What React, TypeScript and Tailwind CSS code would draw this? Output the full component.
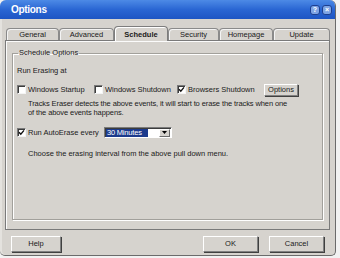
const tabs = [
  { label: "General", w: "w-[53px]" },
  { label: "Advanced", w: "w-[55px]" },
  { label: "Schedule", w: "w-[54px]", active: true },
  { label: "Security", w: "w-[51px]" },
  { label: "Homepage", w: "w-[54px]" },
  { label: "Update", w: "w-[57px]" },
];

const CheckBox = ({ checked }: { checked?: boolean }) => (
  <span className="flex h-[9px] w-[9px] shrink-0 items-center justify-center border border-t-[#7a7a7a] border-l-[#7a7a7a] border-r-[#f4f4f4] border-b-[#f4f4f4] bg-white shadow-[inset_1px_1px_0_#3c3c3c]">
    {checked && (
      <svg width="7" height="7" viewBox="0 0 7 7">
        <polyline points="1,3.2 2.8,5.2 6,1.4" fill="none" stroke="#111" strokeWidth="1.4" />
      </svg>
    )}
  </span>
);

const Button = ({ children, w }: { children: string; w: string }) => (
  <button
    className={`${w} flex h-[16px] items-center justify-center border border-t-white border-l-white border-r-[#808080] border-b-[#808080] bg-[#d6d3ce] text-[7.5px] text-[#1a1a1a] shadow-[1px_1px_0_#404040]`}>
    {children}
  </button>
);

export default function App() {
  return (
    <div className="h-[258px] w-[340px] overflow-hidden bg-[#f2f2f2] font-['Liberation_Sans',Arial,sans-serif] text-[7.5px] leading-[10px] text-[#1a1a1a]">
      <div className="flex h-[256px] w-[336px] flex-col overflow-hidden rounded-t-[6px] rounded-b-[5px] border-r border-b border-[#6b6b6b] bg-[#d6d3ce] shadow-[inset_2px_0_0_#e4e2de]">
        {/* Title bar */}
        <div className="flex h-[19px] shrink-0 items-center justify-between bg-gradient-to-b from-[#4d8ae6] via-[#2a66d3] to-[#1d55c4] pl-[11px] pr-[3px]">
          <span className="text-[10px] font-bold tracking-[-0.3px] text-white">Options</span>
          <div className="flex gap-[2px]">
            <span className="flex h-[10px] w-[10px] items-center justify-center rounded-[3px] border border-[#1d3f8f] bg-[#7ea4e4] text-[7px] font-bold leading-none text-white">?</span>
            <span className="flex h-[10px] w-[10px] items-center justify-center rounded-[3px] border border-[#1d3f8f] bg-[#7ea4e4] text-[7px] font-bold leading-none text-white">×</span>
          </div>
        </div>

        <div className="flex flex-col px-[5px] pt-[7px]">
          {/* Tabs */}
          <div className="ml-[1px] flex h-[14px] items-end">
            {tabs.map((t) =>
              t.active ? (
                <div
                  key={t.label}
                  className={`${t.w} relative z-10 mb-[-1px] flex h-[15px] items-center justify-center rounded-t-[4px] border border-b-0 border-[#7d7d7d] bg-[#d6d3ce] pt-[2px] font-bold shadow-[inset_1px_1px_0_#fff]`}>
                  {t.label}
                </div>
              ) : (
                <div
                  key={t.label}
                  className={`${t.w} flex h-[12px] items-center justify-center rounded-t-[4px] border border-b-0 border-[#8a8a8a] bg-[#d6d3ce] pt-[1px] shadow-[inset_1px_1px_0_#f4f4f4]`}>
                  {t.label}
                </div>
              ),
            )}
          </div>

          {/* Tab panel */}
          <div className="flex h-[190px] flex-col border border-[#7a7a7a] px-[6px] pt-[7px] shadow-[inset_1px_1px_0_#fbfbfb]">
            <fieldset className="h-[172px] border border-[#a2a09b] px-[4px] pt-[8px] shadow-[inset_1px_1px_0_#fff,1px_1px_0_#fff]">
              <legend className="ml-[1px] px-[1px] text-[7.5px] leading-[10px]">Schedule Options</legend>

              <div className="leading-[10px]">Run Erasing at</div>

              {/* Events row */}
              <div className="mt-[8px] flex h-[11px] items-center">
                <label className="flex w-[77px] items-center gap-[2px]">
                  <CheckBox />
                  <span>Windows Startup</span>
                </label>
                <label className="flex w-[83px] items-center gap-[2px]">
                  <CheckBox />
                  <span>Windows Shutdown</span>
                </label>
                <label className="flex w-[87px] items-center gap-[2px]">
                  <CheckBox checked />
                  <span>Browsers Shutdown</span>
                </label>
                <button className="flex h-[12px] w-[34px] items-center justify-center border border-t-white border-l-white border-r-[#808080] border-b-[#808080] bg-[#d6d3ce] text-[7.5px] shadow-[1px_1px_0_#404040]">
                  Options
                </button>
              </div>

              <p className="mt-[4px] pl-[11px] leading-[9px] tracking-[-0.1px]">
                Tracks Eraser detects the above events, it will start to erase the tracks when one
                <br />
                of the above events happens.
              </p>

              {/* AutoErase row */}
              <div className="mt-[10px] flex h-[11px] items-center">
                <label className="flex w-[87px] items-center gap-[2px]">
                  <CheckBox checked />
                  <span>Run AutoErase every</span>
                </label>
                <div className="flex h-[11px] w-[68px] items-center border border-t-[#7a7a7a] border-l-[#7a7a7a] border-r-white border-b-white bg-white p-[1px] shadow-[inset_1px_1px_0_#3c3c3c]">
                  <span className="flex h-[8px] w-[42px] items-center whitespace-nowrap bg-[#1c3a8c] pl-[1px] tracking-[-0.2px] text-white">30 Minutes</span>
                  <span className="ml-auto flex h-[8px] w-[11px] items-center justify-center border border-t-white border-l-white border-r-[#6a6a6a] border-b-[#6a6a6a] bg-[#d6d3ce]">
                    <svg width="5" height="3" viewBox="0 0 5 3">
                      <polygon points="0,0 5,0 2.5,3" fill="#000" />
                    </svg>
                  </span>
                </div>
              </div>

              <p className="mt-[11px] pl-[11px] leading-[10px]">
                Choose the erasing interval from the above pull down menu.
              </p>
            </fieldset>
          </div>

          {/* Footer buttons */}
          <div className="mt-[6px] flex items-center pl-[6px] pr-[6px]">
            <Button w="w-[50px]">Help</Button>
            <div className="ml-auto flex gap-[11px]">
              <Button w="w-[55px]">OK</Button>
              <Button w="w-[55px]">Cancel</Button>
            </div>
          </div>
        </div>
      </div>
    </div>
  );
}
